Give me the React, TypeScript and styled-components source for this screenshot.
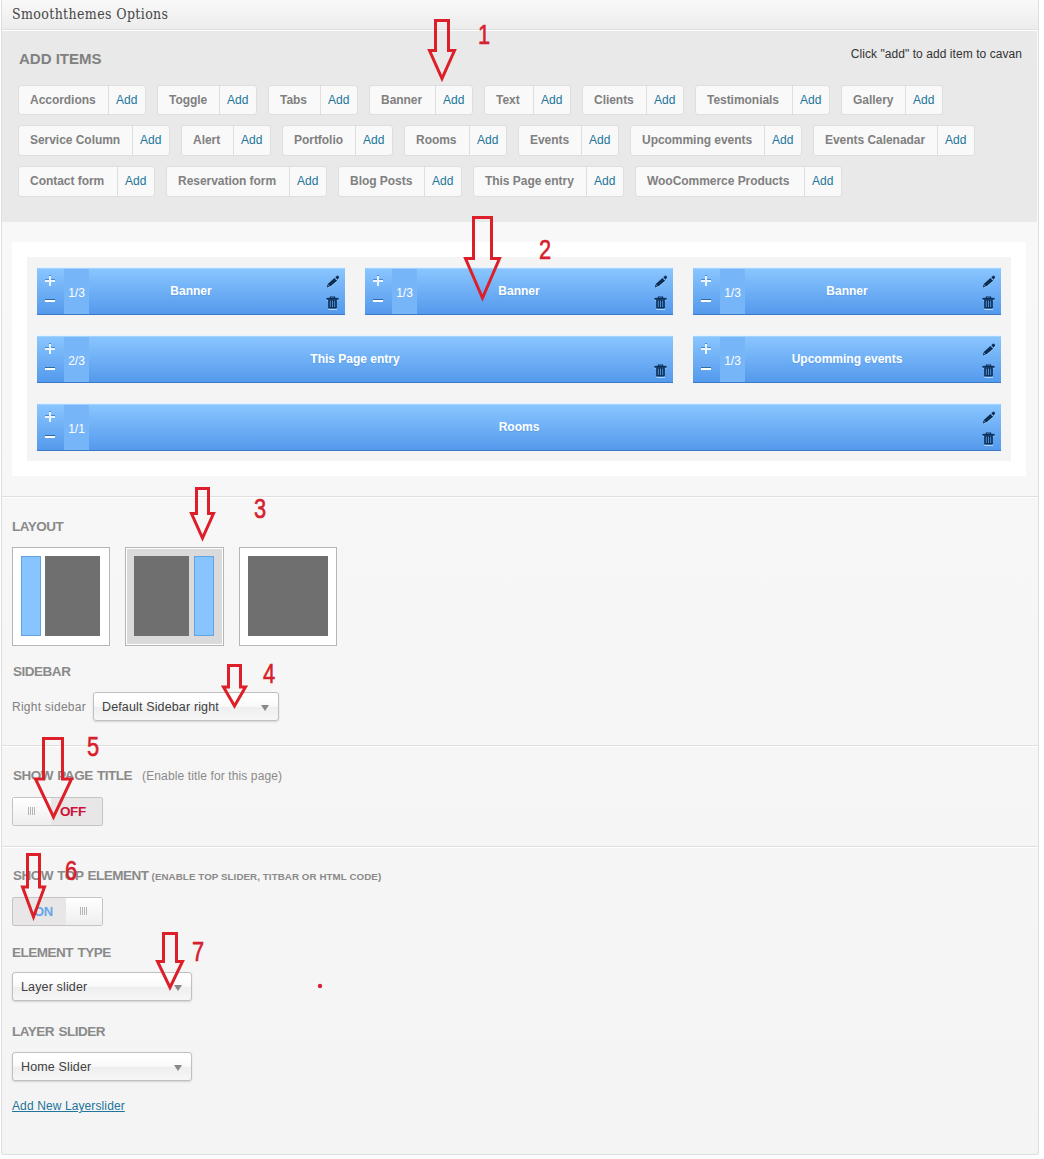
import React from 'react';
import styled, { createGlobalStyle } from 'styled-components';

const GlobalStyle = createGlobalStyle`
  * { box-sizing: border-box; }
  body {
    margin: 0;
    background: #fff;
    font-family: "Liberation Sans", Arial, sans-serif;
    font-size: 12px;
    color: #333;
  }
`;

const Page = styled.div`
  position: relative;
  width: 1044px;
  height: 1159px;
  padding-left: 1px;
  overflow: hidden;
`;

const Panel = styled.main`
  display: flex;
  flex-direction: column;
  width: 1038px;
  height: 1155px;
  border: 1px solid #dfdfdf;
  border-top: 0;
  border-radius: 0 0 3px 3px;
  background: linear-gradient(#f9f9f9, #f4f4f4);
`;

const Header = styled.h1`
  flex: none;
  display: flex;
  align-items: center;
  height: 30px;
  margin: 0;
  padding: 0 0 1px 10px;
  border-bottom: 1px solid #dfdfdf;
  background: linear-gradient(#f9f9f9, #ececec);
  font: 400 14px "DejaVu Serif Condensed", "DejaVu Serif", serif;
  font-stretch: condensed;
  color: #464646;
  letter-spacing: 0.37px;
`;

const Palette = styled.section`
  flex: none;
  height: 192px;
  margin-right: 1px;
  padding: 19px 15px 0 16px;
  border-top: 1px solid #fff;
  background: #e9e9e9;
`;

const PaletteHead = styled.div`
  display: flex;
  justify-content: space-between;
  height: 35px;
`;

const PaletteTitle = styled.h2`
  margin: 0 0 0 1px;
  font-size: 15px;
  line-height: 17px;
  color: #808080;
`;

const Hint = styled.span`
  margin-top: -4px;
  line-height: 16px;
  letter-spacing: 0.06px;
`;

const ChipRow = styled.div<{ $h?: number }>`
  display: flex;
  gap: 11px;
  height: ${(p) => p.$h ?? 31}px;
  margin-bottom: 10px;
`;

const Chip = styled.div<{ $w: number }>`
  display: flex;
  width: ${(p) => p.$w}px;
  border: 1px solid #dedede;
  border-radius: 3px;
  background: #f9f9f9;
  line-height: 29px;
  white-space: nowrap;
`;

const ChipLabel = styled.span`
  flex: 1;
  min-width: 0;
  padding-left: 11px;
  font-weight: 700;
  letter-spacing: -0.04px;
  color: #808080;
`;

const ChipAdd = styled.a`
  width: 37px;
  padding-left: 7px;
  border-left: 1px solid #dedede;
  color: #21759b;
`;

const Canvas = styled.section`
  flex: none;
  width: 1014px;
  height: 234px;
  margin: 20px 0 20px 10px;
  padding: 15px;
  background: #fff;
`;

const Grid = styled.div`
  display: grid;
  grid-template-columns: repeat(3, 308px);
  grid-auto-rows: 48px;
  gap: 20px;
  height: 204px;
  padding: 10px;
  background: #f4f4f4;
`;

const Block = styled.article<{ $span: number }>`
  grid-column: span ${(p) => p.$span};
  display: flex;
  align-items: stretch;
  border-top: 1px solid #e6f2ff;
  border-bottom: 1px solid #3a79c4;
  background: linear-gradient(#8ac6ff, #5499ec);
  box-shadow: inset 0 1px #a2d2ff;
  color: #fff;
`;

const Resize = styled.div`
  width: 27px;
  padding: 7px 0 0 7px;
`;

const Size = styled.div`
  width: 25px;
  margin-top: 1px;
  background: #77b5f9;
  text-align: center;
  line-height: 49px;
`;

const BlockTitle = styled.div`
  flex: 1;
  margin-left: -52px;
  padding-left: 26px;
  text-align: center;
  line-height: 46px;
  font-weight: 700;
  text-shadow: 0 1px 1px rgba(40, 100, 170, 0.2);
`;

const Tools = styled.div`
  display: flex;
  flex-direction: column;
  justify-content: flex-end;
  gap: 8px;
  width: 26px;
  padding: 0 0 4px 7px;
`;

const Group = styled.section<{ $h: number }>`
  flex: none;
  height: ${(p) => p.$h}px;
  padding: 20px 0 0 10px;
  border-top: 1px solid #dfdfdf;
  box-shadow: inset 0 1px #fff;
`;

const Heading = styled.h3<{ $mt?: number; $mb: number; $indent?: number }>`
  display: flex;
  align-items: baseline;
  height: 18px;
  margin: ${(p) => p.$mt ?? 0}px 0 ${(p) => p.$mb}px ${(p) => p.$indent ?? 0}px;
  font-size: 13.5px;
  line-height: 19px;
  letter-spacing: -0.48px;
  word-spacing: 1px;
  color: #8a8a8a;
  white-space: pre;
`;

const Note = styled.span`
  margin-left: 10px;
  font-size: 12px;
  font-weight: 400;
  letter-spacing: 0.12px;
  word-spacing: 0;
`;

const SmallNote = styled.span`
  margin-left: 3px;
  font-size: 9.75px;
  letter-spacing: 0.08px;
  word-spacing: 0;
`;

const Thumbs = styled.div`
  display: flex;
  gap: 15px;
`;

const Thumb = styled.div<{ $on?: boolean }>`
  display: flex;
  gap: ${(p) => (p.$on ? 5 : 4)}px;
  width: ${(p) => (p.$on ? 99 : 98)}px;
  height: 99px;
  padding: 8px 8px 9px;
  border: 1px solid #b5b5b5;
  background: ${(p) => (p.$on ? '#dadada' : '#fff')};
  box-shadow: inset 0 0 0 1px #fff;
`;

const Content = styled.div<{ $w: number }>`
  width: ${(p) => p.$w}px;
  background: #6f6f6f;
`;

const Side = styled.div`
  width: 20px;
  border: 1px solid #60a3e6;
  background: #88c4ff;
`;

const Field = styled.div`
  display: flex;
  align-items: center;
  gap: 7px;
  color: #808080;
`;

const FieldLabel = styled.span`
  width: 74px;
  white-space: nowrap;
  letter-spacing: 0.25px;
`;

const Select = styled.div<{ $w: number }>`
  display: flex;
  align-items: center;
  justify-content: space-between;
  width: ${(p) => p.$w}px;
  height: 29px;
  padding: 0 9px 0 8px;
  border: 1px solid #bfbfbf;
  border-radius: 3px;
  background: linear-gradient(#fff 20%, #f8f8f8 50%, #eee 52%, #f7f7f7 100%);
  box-shadow: 0 1px 2px rgba(0, 0, 0, 0.14);
  color: #404040;
  font-size: 12.5px;
  letter-spacing: 0.14px;
`;

const Caret = styled.i`
  margin-top: 2px;
  border: 4px solid transparent;
  border-top: 6px solid #888;
  border-bottom: 0;
`;

const Switch = styled.div<{ $on?: boolean }>`
  display: flex;
  flex-direction: ${(p) => (p.$on ? 'row-reverse' : 'row')};
  width: 91px;
  height: 29px;
  border: 1px solid #c4c4c4;
  border-radius: 2px;
  background: #e8e6e7;
  line-height: 28px;
`;

const Knob = styled.div<{ $on?: boolean }>`
  display: flex;
  align-items: center;
  justify-content: center;
  gap: 1px;
  width: ${(p) => (p.$on ? 36 : 38)}px;
  padding: 0 1px 1px 0;
  background: linear-gradient(#fff, #eee);
`;

const Grip = styled.i`
  width: 1px;
  height: 8px;
  background: #b5b5b5;
`;

const SwitchText = styled.b<{ $on?: boolean }>`
  flex: 1;
  padding-left: ${(p) => (p.$on ? 21 : 9)}px;
  font-size: ${(p) => (p.$on ? 13 : 13.5)}px;
  letter-spacing: -0.4px;
  color: ${(p) => (p.$on ? '#65a5ea' : '#ce1237')};
`;

const Link = styled.a`
  display: inline-block;
  margin-top: 17px;
  color: #21759b;
  line-height: 16px;
  letter-spacing: 0.11px;
  text-decoration: underline;
  text-underline-offset: 1px;
`;

const Overlay = styled.div`
  position: absolute;
  inset: 0;
  pointer-events: none;
`;

const ArrowLayer = styled.svg`
  position: absolute;
  inset: 0;
`;

const Digit = styled.span<{ $x: number; $y: number }>`
  position: absolute;
  left: ${(p) => p.$x}px;
  top: ${(p) => p.$y}px;
  width: 16px;
  font-size: 28px;
  line-height: 20px;
  color: #d6202b;
  -webkit-text-stroke: 0.6px #d6202b;
  transform: scaleX(0.78);
  transform-origin: 0 0;
`;

type ChipData = [string, number];

const chipRows: ChipData[][] = [
  [['Accordions', 128], ['Toggle', 100], ['Tabs', 90], ['Banner', 104], ['Text', 87], ['Clients', 102], ['Testimonials', 135], ['Gallery', 102]],
  [['Service Column', 152], ['Alert', 90], ['Portfolio', 111], ['Rooms', 103], ['Events', 101], ['Upcomming events', 172], ['Events Calenadar', 162]],
  [['Contact form', 137], ['Reservation form', 161], ['Blog Posts', 124], ['This Page entry', 151], ['WooCommerce Products', 207]],
];

const blocks = [
  { title: 'Banner', size: '1/3', span: 1, edit: true },
  { title: 'Banner', size: '1/3', span: 1, edit: true },
  { title: 'Banner', size: '1/3', span: 1, edit: true },
  { title: 'This Page entry', size: '2/3', span: 2, edit: false },
  { title: 'Upcomming events', size: '1/3', span: 1, edit: true },
  { title: 'Rooms', size: '1/1', span: 3, edit: true },
];

// Each arrow: shaft left/right, top, head y, head left/right, tip x/y.
const arrows = [
  [435.5, 448.5, 20.5, 50.5, 429.5, 454.5, 442, 78.5],
  [473.5, 491.5, 217.5, 258.5, 465.5, 499.5, 482.5, 298],
  [196.5, 208.5, 488.5, 513.5, 191.5, 213.5, 202.5, 538],
  [228.5, 240.5, 665.5, 687, 223.5, 245.5, 234.5, 706],
  [43.5, 62.5, 738.5, 779, 35.5, 71.5, 53.5, 817],
  [27.5, 39.5, 854.5, 887, 22.5, 44.5, 33.5, 917],
  [163.5, 176.5, 933.5, 961.5, 157.5, 182.5, 170, 987.5],
];

const digits = [
  [478, 25], [539, 240], [254, 499], [263, 664], [87, 737], [65, 861], [192, 942],
];

const PlusMinus = () => (
  <svg width="12" height="31" viewBox="0 0 12 31" shapeRendering="crispEdges">
    <path d="M1 4.5h10M5 .5h2" stroke="#4b88cc" strokeWidth="1" />
    <path d="M1 6h10M6 1v10" stroke="#fff" strokeWidth="2" opacity=".85" />
    <path d="M1 24.5h10" stroke="#33699f" strokeWidth="1" />
    <path d="M1 26h10" stroke="#fff" strokeWidth="2" />
  </svg>
);

const Pencil = () => (
  <svg width="14" height="13" viewBox="0 0 14 13">
    <path d="M1.5 13l1-2.8L9.2 4.5l1.9 1.9-6.3 5.4zM11 4.4l1.9-1.8.6.8-1.5 1.9z" fill="#b3d8ff" opacity=".8" />
    <path d="M.8 12.4l1-3.3 6.6-6 2.7 2.6-6.6 5.6zM9.3 2.3L11 .8q.6-.4 1.1 0l.8.9q.4.6 0 1.1L11.7 4.8z" fill="#0a2d55" />
    <path d="M2 9.9l1.7 1.6" stroke="#9cc9f6" strokeWidth=".7" />
  </svg>
);

const Trash = () => (
  <svg width="14" height="14" viewBox="0 0 14 14">
    <path d="M2.5 13.4h8.5M.5 4.2h1.2M11.3 4.2h1.2" stroke="#b9dcff" />
    <path d="M4.4 2V1h4.2v1" fill="none" stroke="#0a2d55" strokeWidth="1.2" />
    <path d="M.5 2.8h12" stroke="#0a2d55" strokeWidth="1.8" />
    <path d="M2.2 3.6h8.6v7.6q0 1.2-1.2 1.2H3.4q-1.2 0-1.2-1.2z" fill="#0a2d55" />
    <path d="M4.3 4.5v6.7M6.5 4.5v6.7M8.7 4.5v6.7" stroke="#5c9de4" strokeWidth=".9" />
  </svg>
);

function Toggle({ on }: { on?: boolean }) {
  return (
    <Switch $on={on}>
      <Knob $on={on}><Grip /><Grip /><Grip /><Grip /></Knob>
      <SwitchText $on={on}>{on ? 'ON' : 'OFF'}</SwitchText>
    </Switch>
  );
}

export default function App() {
  return (
    <Page>
      <GlobalStyle />
      <Panel>
        <Header>Smooththemes Options</Header>
        <Palette>
          <PaletteHead>
            <PaletteTitle>ADD ITEMS</PaletteTitle>
            <Hint>Click "add" to add item to cavan</Hint>
          </PaletteHead>
          {chipRows.map((row, i) => (
            <ChipRow key={i} $h={i === 0 ? 30 : 31}>
              {row.map(([name, w]) => (
                <Chip key={name} $w={w}>
                  <ChipLabel>{name}</ChipLabel>
                  <ChipAdd>Add</ChipAdd>
                </Chip>
              ))}
            </ChipRow>
          ))}
        </Palette>
        <Canvas>
          <Grid>
            {blocks.map((b, i) => (
              <Block key={i} $span={b.span}>
                <Resize><PlusMinus /></Resize>
                <Size>{b.size}</Size>
                <BlockTitle>{b.title}</BlockTitle>
                <Tools>
                  {b.edit && <Pencil />}
                  <Trash />
                </Tools>
              </Block>
            ))}
          </Grid>
        </Canvas>
        <Group $h={249}>
          <Heading $mb={12}>LAYOUT</Heading>
          <Thumbs>
            <Thumb><Side /><Content $w={55} /></Thumb>
            <Thumb $on><Content $w={55} /><Side /></Thumb>
            <Thumb><Content $w={80} /></Thumb>
          </Thumbs>
          <Heading $mt={16} $mb={12} $indent={1}>SIDEBAR</Heading>
          <Field>
            <FieldLabel>Right sidebar</FieldLabel>
            <Select $w={186}>Default Sidebar right<Caret /></Select>
          </Field>
        </Group>
        <Group $h={101}>
          <Heading $mb={13} $indent={1}>SHOW PAGE TITLE<Note>(Enable title for this page)</Note></Heading>
          <Toggle />
        </Group>
        <Group $h={300}>
          <Heading $mt={-1} $mb={13} $indent={1}>SHOW TOP ELEMENT<SmallNote>(ENABLE TOP SLIDER, TITBAR OR HTML CODE)</SmallNote></Heading>
          <Toggle on />
          <Heading $mt={17} $mb={11}>ELEMENT TYPE</Heading>
          <Select $w={180}>Layer slider<Caret /></Select>
          <Heading $mt={21} $mb={12}>LAYER SLIDER</Heading>
          <Select $w={180}>Home Slider<Caret /></Select>
          <Link>Add New Layerslider</Link>
        </Group>
      </Panel>
      <Overlay>
        <ArrowLayer width="1044" height="1159">
          {arrows.map(([l, r, t, h, hl, hr, x, y], i) => (
            <path
              key={i}
              d={`M${l} ${t}H${r}V${h}H${hr}L${x} ${y}L${hl} ${h}H${l}Z`}
              fill="none"
              stroke="#dc1f29"
              strokeWidth="3"
            />
          ))}
          <circle cx="320" cy="986" r="2.2" fill="#d3203c" />
        </ArrowLayer>
        {digits.map(([x, y], i) => (
          <Digit key={i} $x={x} $y={y}>{i + 1}</Digit>
        ))}
      </Overlay>
    </Page>
  );
}
